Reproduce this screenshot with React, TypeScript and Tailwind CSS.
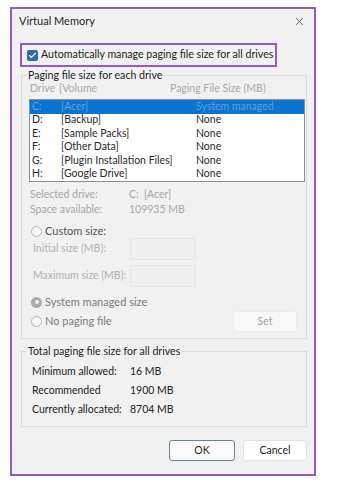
import { X, Check } from "lucide-react";

const drives = [
  { letter: "C:", volume: "[Acer]", size: "System managed" },
  { letter: "D:", volume: "[Backup]", size: "None" },
  { letter: "E:", volume: "[Sample Packs]", size: "None" },
  { letter: "F:", volume: "[Other Data]", size: "None" },
  { letter: "G:", volume: "[Plugin Installation Files]", size: "None" },
  { letter: "H:", volume: "[Google Drive]", size: "None" },
];

function Radio({ checked }: { checked?: boolean }) {
  return checked ? (
    <span className="w-[11px] h-[11px] rounded-full bg-[#a9a9a9] flex items-center justify-center shrink-0">
      <span className="w-[4px] h-[4px] rounded-full bg-[#f4f4f4]" />
    </span>
  ) : (
    <span className="w-[11px] h-[11px] rounded-full border border-[#b4b4b4] bg-[#f7f7f7] shrink-0" />
  );
}

export default function App() {
  return (
    <div className="min-h-[497px] bg-white pl-[10px] pt-[7px] font-['Lato',sans-serif] text-[10.5px] text-[#1c1c1c] whitespace-nowrap">
      <div className="w-[306px] h-[469px] border-2 border-[#9459c4] bg-[#f1f1f1] flex flex-col">
        {/* title bar */}
        <div className="h-[24px] flex items-center justify-between pl-[7px] pr-[8px]">
          <span className="text-[11px]">Virtual Memory</span>
          <X size={13} strokeWidth={1.3} className="text-[#333]" />
        </div>

        {/* auto manage checkbox */}
        <div className="mt-[10px] ml-[8px] w-[257px] h-[24px] border-2 border-[#9459c4] flex items-center pl-[5px] gap-[3px]">
          <span className="w-[11px] h-[11px] rounded-[2px] bg-[#2c6cb4] flex items-center justify-center">
            <Check size={9} strokeWidth={3} className="text-white" />
          </span>
          <span className="text-[10.6px]">Automatically manage paging file size for all drives</span>
        </div>

        {/* paging file size for each drive */}
        <fieldset className="mt-[2px] ml-[9px] w-[286px] border border-[#dedede] pl-[7px] pr-[1px] pb-[6px]">
          <legend className="-ml-[2px] px-[1px] leading-[13px] text-[10.6px]">Paging file size for each drive</legend>
          <div className="h-[14px] flex items-center text-[#a8a8a8] pl-[1px]">
            <span className="w-[29px]">Drive</span>
            <span className="w-[111px]">[Volume</span>
            <span>Paging File Size (MB)</span>
          </div>
          <div className="mt-[3px] border border-[#8f8f8f] bg-white">
            {drives.map((d, i) => (
              <div
                key={d.letter}
                className={
                  i === 0
                    ? "h-[13.5px] flex items-center pl-[2px] bg-[#0a74d0] text-[#5f9ee0]"
                    : "h-[13.5px] flex items-center pl-[2px] text-[#2a2a2a]"
                }
              >
                <span className="w-[29px]">{d.letter}</span>
                <span className="w-[135px]">{d.volume}</span>
                <span>{d.size}</span>
              </div>
            ))}
          </div>

          <div className="mt-[5px] text-[#a8a8a8] pl-[1px]">
            <div className="h-[15px] flex items-center">
              <span className="w-[99px]">Selected drive:</span>
              <span>C:&nbsp; [Acer]</span>
            </div>
            <div className="h-[15px] flex items-center">
              <span className="w-[99px]">Space available:</span>
              <span>109935 MB</span>
            </div>
          </div>

          <div className="mt-[7px] h-[14px] flex items-center gap-[3px] pl-[2px] text-[#555] text-[11px]">
            <Radio />
            <span>Custom size:</span>
          </div>
          <div className="h-[22px] flex items-center text-[#b2b2b2] pl-[4px]">
            <span className="w-[97px]">Initial size (MB):</span>
            <span className="w-[66px] h-[22px] border border-[#e6e6e6] bg-[#f0f0f0]" />
          </div>
          <div className="mt-[5px] h-[22px] flex items-center text-[#b2b2b2] pl-[4px]">
            <span className="w-[97px]">Maximum size (MB):</span>
            <span className="w-[66px] h-[22px] border border-[#e6e6e6] bg-[#f0f0f0]" />
          </div>

          <div className="mt-[8px] h-[14px] flex items-center gap-[3px] pl-[2px] text-[#7a7a7a] text-[11px]">
            <Radio checked />
            <span>System managed size</span>
          </div>
          <div className="mt-[2px] h-[21px] flex items-center justify-between pl-[2px] pr-[8px]">
            <div className="flex items-center gap-[3px] text-[#7a7a7a] text-[11px]">
              <Radio />
              <span>No paging file</span>
            </div>
            <button className="w-[64px] h-[21px] rounded-[3px] border border-[#ececec] bg-[#f8f8f8] text-[#a0a0a0]">
              Set
            </button>
          </div>
        </fieldset>

        {/* totals */}
        <fieldset className="mt-[6px] ml-[9px] w-[286px] border border-[#dedede] pl-[7px] pb-[7px]">
          <legend className="-ml-[2px] px-[1px] leading-[13px] text-[10.6px]">Total paging file size for all drives</legend>
          <div className="mt-[4px] pl-[3px] text-[#222]">
            <div className="h-[19px] flex items-center">
              <span className="w-[98px]">Minimum allowed:</span>
              <span>16 MB</span>
            </div>
            <div className="h-[19px] flex items-center">
              <span className="w-[98px]">Recommended</span>
              <span>1900 MB</span>
            </div>
            <div className="h-[19px] flex items-center">
              <span className="w-[98px]">Currently allocated:</span>
              <span>8704 MB</span>
            </div>
          </div>
        </fieldset>

        {/* buttons */}
        <div className="mt-[13px] flex justify-end gap-[8px] pr-[7px]">
          <button className="w-[66px] h-[21px] rounded-[3px] border border-[#5b8799] bg-[#fbfbfb]">OK</button>
          <button className="w-[64px] h-[21px] rounded-[3px] border border-[#e2e2e2] bg-white">Cancel</button>
        </div>
      </div>
    </div>
  );
}
